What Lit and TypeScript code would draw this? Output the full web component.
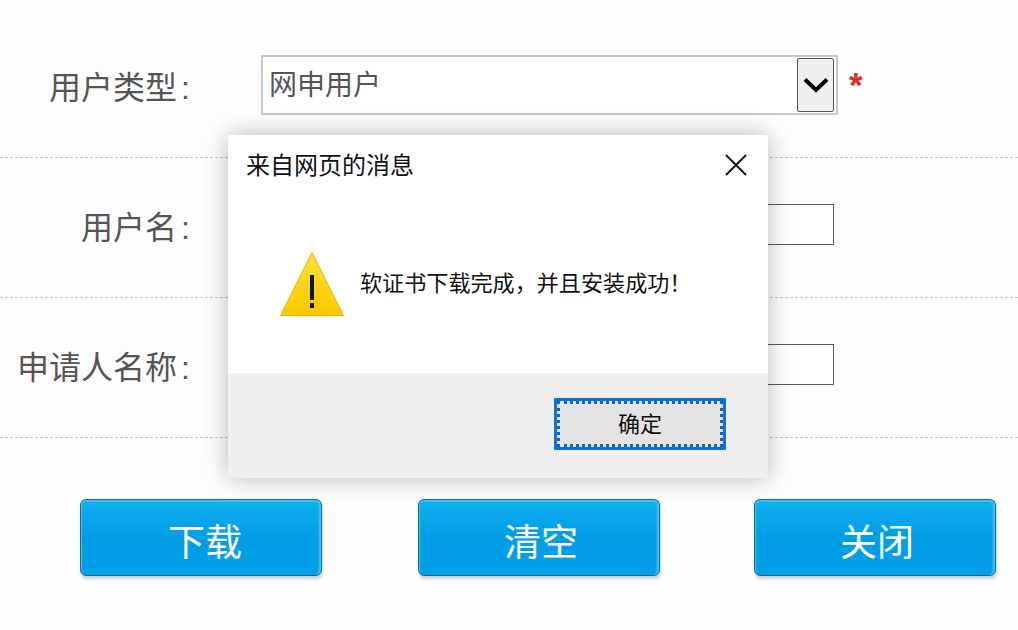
import { LitElement, html, css } from "lit";
import { customElement } from "lit/decorators.js";

@customElement("app-root")
export class AppRoot extends LitElement {
  static styles = css`
    :host {
      display: block;
      position: relative;
      width: 1018px;
      height: 630px;
      overflow: hidden;
      background: #fdfdfe;
      font-family: "Liberation Sans", "Noto Sans CJK SC", sans-serif;
    }
    .form { padding-top: 18px; }
    .row {
      display: grid;
      grid-template-columns: 191px 1fr;
      column-gap: 70px;
      height: 140px;
      box-sizing: border-box;
      border-bottom: 1px dashed #c4c4c4;
      align-items: center;
    }
    .label {
      font-size: 32px;
      color: #555;
      text-align: right;
      white-space: nowrap;
      padding: 0 1px 6px 0;
    }
    .label span { margin-left: 4px; }
    .field { display: flex; align-items: center; gap: 11px; margin-top: -6px; }
    .select {
      width: 577px;
      height: 60px;
      box-sizing: border-box;
      border: 2px solid #c8c8c8;
      background: #fff;
      display: flex;
      align-items: center;
      justify-content: space-between;
      padding: 1px 1px 1px 6px;
      font-size: 28px;
      color: #555;
    }
    .select .text { margin-top: -4px; }
    .arrow {
      width: 37px;
      height: 54px;
      box-sizing: border-box;
      border: 1.5px solid #555;
      border-radius: 2px;
      background: #efefef;
      display: flex;
      align-items: center;
      justify-content: center;
      margin-right: 1px;
    }
    .star {
      color: #e4262a;
      font-size: 35px;
      font-weight: 700;
      line-height: 1;
      font-family: "Liberation Sans", sans-serif;
    }
    .input {
      width: 573px;
      height: 41px;
      box-sizing: border-box;
      border: 1.5px solid #5a5a5a;
      background: #fff;
    }
    .buttons {
      display: flex;
      padding: 61px 0 0 80px;
      gap: 96px;
    }
    .btn {
      width: 242px;
      height: 77px;
      box-sizing: border-box;
      border: 1.5px solid #0c6f99;
      border-radius: 6px;
      background: linear-gradient(#12aef0, #019ee6 50%, #029ee8);
      box-shadow: inset 0 2px 0 #3cc3f5, inset -3px 0 2px -1px #4cc2f0, inset 2px 0 1px -1px #45bff0, 1px 3px 3px rgba(120, 100, 70, 0.3);
      color: #fff;
      font-size: 37px;
      display: flex;
      align-items: center;
      justify-content: center;
      padding: 4px 0 0 4px;
    }
    .btn.first { padding-left: 8px; }
    .btn.mid { margin-right: -2px; }
    .dialog {
      position: absolute;
      left: 228px;
      top: 135px;
      width: 540px;
      height: 343px;
      border-radius: 2px;
      background: #fff;
      box-shadow: 0 0 24px rgba(0, 0, 0, 0.28);
      display: flex;
      flex-direction: column;
      color: #111;
    }
    .head {
      display: flex;
      align-items: center;
      justify-content: space-between;
      height: 60px;
      padding: 0 21px 0 18px;
      font-size: 24px;
    }
    .head .title { margin-top: -4px; }
    .msg {
      flex: 1;
      display: flex;
      align-items: flex-start;
      gap: 16px;
      padding: 57px 0 0 52px;
      font-size: 22.1px;
    }
    .msg .text { margin-top: 13px; }
    .foot {
      height: 105px;
      box-sizing: border-box;
      background: #f0eff0;
      border-radius: 0 0 2px 2px;
      display: flex;
      justify-content: flex-end;
      align-items: flex-start;
      padding: 25px 42px 0 0;
    }
    .ok {
      width: 172px;
      height: 52px;
      box-sizing: border-box;
      border: 3px solid #0a72d8;
      background: #e5e3e3;
      outline: 3px dotted #0a66cc;
      outline-offset: -6px;
      display: flex;
      align-items: center;
      justify-content: center;
      font-size: 22px;
      padding-bottom: 4px;
    }
    svg { display: block; }
  `;

  render() {
    return html`
      <div class="form">
        <div class="row">
          <div class="label">用户类型<span>:</span></div>
          <div class="field">
            <div class="select">
              <span class="text">网申用户</span>
              <div class="arrow">
                <svg width="26" height="18" viewBox="0 0 26 18"><path d="M2 3.500 13 14 24 3.500" fill="none" stroke="#000" stroke-width="4"/></svg>
              </div>
            </div>
            <span class="star">*</span>
          </div>
        </div>
        <div class="row">
          <div class="label">用户名<span>:</span></div>
          <div class="field"><div class="input"></div></div>
        </div>
        <div class="row">
          <div class="label">申请人名称<span>:</span></div>
          <div class="field"><div class="input"></div></div>
        </div>
      </div>
      <div class="buttons">
        <div class="btn first">下载</div>
        <div class="btn mid">清空</div>
        <div class="btn">关闭</div>
      </div>
      <div class="dialog">
        <div class="head">
          <span class="title">来自网页的消息</span>
          <svg width="22" height="22" viewBox="0 0 22 22"><path d="M1 1 21 21M21 1 1 21" stroke="#111" stroke-width="2" fill="none"/></svg>
        </div>
        <div class="msg">
          <svg width="64" height="64" viewBox="0 0 64 64">
            <defs><linearGradient id="w" x1="0" y1="0" x2="0" y2="1"><stop offset="0" stop-color="#fde03a"/><stop offset="1" stop-color="#fbc800"/></linearGradient></defs>
            <path d="M32 .5 63.500 63.500H.5Z" fill="url(#w)" stroke="#e8b400" stroke-width="1"/>
            <rect x="30" y="23" width="4" height="25" fill="#111"/>
            <rect x="30" y="51" width="4" height="5" fill="#111"/>
          </svg>
          <span class="text">软证书下载完成，并且安装成功！</span>
        </div>
        <div class="foot"><div class="ok">确定</div></div>
      </div>
    `;
  }
}
